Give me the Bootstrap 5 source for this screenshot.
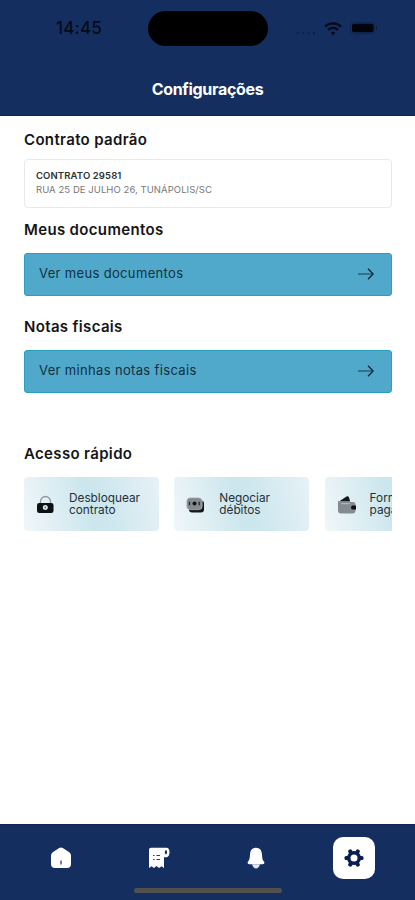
<!DOCTYPE html>
<html lang="pt-BR">
<head>
<meta charset="utf-8">
<meta name="viewport" content="width=device-width, initial-scale=1">
<title>Configurações</title>
<link href="https://cdn.jsdelivr.net/npm/bootstrap@5.3.0/dist/css/bootstrap.min.css" rel="stylesheet">
<style>
  body { font-family: Inter, "Liberation Sans", sans-serif; background: #fff; color: #151517; }
  svg { display: block; flex: none; }
  .phone { height: 900px; max-width: 415px; }
  .app-header { height: 116px; background: #152e60; border-bottom: 1px solid #0e2459; }
  .status { height: 57px; padding: 0 37px 0 56px; color: #040a18; }
  .clock { width: 92px; font-size: 17px; font-weight: 500; line-height: 57px; letter-spacing: .2px; }
  .island { width: 120px; height: 35px; background: #000; }
  .signal { width: 20px; margin-left: 28px; margin-top: 8px; }
  .app-title { font-size: 16px; font-weight: 700; line-height: 20px; margin-top: 22px; color: #fff; letter-spacing: -.32px; }
  .app-main { padding: 14px 23px 0 24px; }
  .section-title { font-size: 15px; font-weight: 600; line-height: 20px; margin: 0; letter-spacing: .34px; }
  .contract { height: 49px; margin: 9px 0 12px; padding: 9px 11px; border: 1px solid #e9e9e9; border-radius: 4px; font-size: 9.5px; line-height: 14px; letter-spacing: .06px; }
  .contract-name { font-weight: 600; color: #303030; letter-spacing: .12px; }
  .contract-address { color: #77777a; }
  .action { height: 43px; margin: 13px 0 21px; padding: 0 17px 1px 14px; background: #50a8ca; border: 1px solid #279fc0; border-radius: 3px; font-size: 13px; letter-spacing: .34px; color: #12303f; }
  .action-last { margin-bottom: 51px; }
  .tiles { gap: 15.3px; margin-top: 13px; }
  .tile { flex: 0 0 135px; height: 54px; padding: 1px 0 0 12px; border-radius: 4px; background: linear-gradient(75deg, #f1f7f9 0%, #cce6ee 48%, #cfe7ef 62%, #e7f2f6 100%); font-size: 11.8px; line-height: 11.5px; color: #263137; letter-spacing: 0; }
  .tile-icon { width: 20px; margin-right: 13px; }
  .app-nav { height: 76px; background: #152e60; border-top: 1px solid #0e2459; }
  .tabs { height: 66px; padding: 0 40px; }
  .tab-item { width: 42px; height: 42px; border-radius: 10px; }
  .home-bar { width: 148px; height: 5px; margin-top: -3px; background: #51504f; }
</style>
</head>
<body>
<div class="phone d-flex flex-column overflow-hidden">
  <header class="app-header flex-shrink-0">
    <div class="status d-flex align-items-center">
      <span class="clock">14:45</span>
      <span class="island rounded-pill"></span>
      <svg class="signal" width="20" height="4" viewBox="0 0 20 4" fill="#0b1c42"><circle cx="2" cy="2" r=".9"/><circle cx="7.3" cy="2" r=".9"/><circle cx="12.6" cy="2" r=".9"/><circle cx="18" cy="2" r=".9"/></svg>
      <svg class="ms-2" width="18" height="14" viewBox="0 0 18 14" fill="none" stroke="#040a18" stroke-width="2.2"><path d="M1 4.7C5.3.3 12.7.3 17 4.7M4 8c2.8-2.8 7.2-2.8 10 0"/><path d="M9 13.2 6.6 10.8c1.4-1.3 3.4-1.3 4.8 0z" fill="#040a18" stroke="none"/></svg>
      <svg class="ms-2" width="28" height="13" viewBox="0 0 28 13"><rect x=".5" y=".3" width="24" height="11.4" rx="3.2" fill="none" stroke="#10254f"/><rect x="2" y="1.7" width="21.5" height="8.6" rx="1.8" fill="#01040a"/><path d="M26 4q2 2 0 4z" fill="#0c1d42"/></svg>
    </div>
    <h1 class="app-title text-center mb-0">Configurações</h1>
  </header>

  <main class="app-main flex-grow-1">
    <h2 class="section-title">Contrato padrão</h2>
    <div class="contract">
      <div class="contract-name">CONTRATO 29581</div>
      <div class="contract-address">RUA 25 DE JULHO 26, TUNÁPOLIS/SC</div>
    </div>
    <h2 class="section-title">Meus documentos</h2>
    <a href="#" class="action d-flex align-items-center justify-content-between text-decoration-none">
      <span>Ver meus documentos</span>
      <svg width="16" height="12" viewBox="0 0 16 12" fill="none" stroke="#0b222e"><path d="M0 6h15" stroke-width=".8"/><path d="m10 .8 5.2 5.2-5.2 5.2" stroke-width="1.3"/></svg>
    </a>
    <h2 class="section-title">Notas fiscais</h2>
    <a href="#" class="action action-last d-flex align-items-center justify-content-between text-decoration-none">
      <span>Ver minhas notas fiscais</span>
      <svg width="16" height="12" viewBox="0 0 16 12" fill="none" stroke="#0b222e"><path d="M0 6h15" stroke-width=".8"/><path d="m10 .8 5.2 5.2-5.2 5.2" stroke-width="1.3"/></svg>
    </a>
    <h2 class="section-title">Acesso rápido</h2>
    <div class="tiles d-flex overflow-hidden">
      <div class="tile d-flex align-items-center">
        <svg class="tile-icon" width="20" height="20" viewBox="0 0 20 20"><path d="M4.500 9V6.500a5 5 0 0 1 10 0V9" fill="none" stroke="#8c979c" stroke-width="1.3"/><rect x="1" y="8" width="16.5" height="10" rx="2.2" fill="#0d1113"/><circle cx="9.3" cy="12.500" r="2.5" fill="#dcebf0"/><circle cx="9.3" cy="12.500" r=".9" fill="#68777d"/></svg>
        <span>Desbloquear<br>contrato</span>
      </div>
      <div class="tile d-flex align-items-center">
        <svg class="tile-icon" width="20" height="20" viewBox="0 0 20 20"><rect x="3" y="5.5" width="15" height="12" rx="3" fill="#171a1c"/><rect x=".7" y="2.7" width="15.5" height="12" rx="3.500" fill="#858b8e" stroke="#c1d7df" stroke-width=".5"/><circle cx="8.5" cy="8.5" r="2" fill="#111"/><path d="M3.500 6.700v3.500M13.200 6.700v3.500" stroke="#25292b" stroke-width="1.3"/></svg>
        <span>Negociar<br>débitos</span>
      </div>
      <div class="tile d-flex align-items-center">
        <svg class="tile-icon" width="20" height="20" viewBox="0 0 20 20"><path d="M2 6.500 9.500 1.500q1.800-1 2.500 1l1.200 4z" fill="#15181a"/><path d="M1 5.500q1 1.500 3 1.500h12q2.500 0 2.500 2.500v6q0 3-3 3H4q-3 0-3-3z" fill="#858b8e"/><path d="M4 8.700h9" stroke="#b5c0c4"/><path d="M19 10.500v4h-3a2 2 0 0 1 0-4z" fill="#0d1012"/></svg>
        <span>Formas de<br>pagamento</span>
      </div>
    </div>
  </main>

  <nav class="app-nav flex-shrink-0">
    <div class="tabs d-flex align-items-center justify-content-between">
      <a href="#" class="tab-item d-flex align-items-center justify-content-center" aria-label="Início">
        <svg width="22" height="22" viewBox="0 0 22 22"><path d="m9.200 1-6.500 4.200Q1 6.500 1 8.500V17q0 4 4 4h12q4 0 4-4V8.500q0-2-1.700-3.300L12.800 1q-1.800-1.200-3.600 0z" fill="#fff"/><path d="M11 13.500v4" stroke="#40506f" stroke-width="1.400"/></svg>
      </a>
      <a href="#" class="tab-item d-flex align-items-center justify-content-center" aria-label="Faturas">
        <svg width="22" height="22" viewBox="0 0 22 22"><path d="M3 .8h15.500q3 0 3 4.500t-3 5H16V21l-2.500-1.700L11 21l-2.500-2L6 21l-2.500-1.700L1 21V2.800q0-2 2-2z" fill="#fff"/><path d="M18 2.800q-2.400 2.500 0 5 2.200-2.500 0-5z" fill="#152e60"/><path d="M5 8.500h1.500M8.500 8.500H12M5 12.500h1.500M8.500 12.500H12" stroke="#253c69" stroke-width="1.200"/></svg>
      </a>
      <a href="#" class="tab-item d-flex align-items-center justify-content-center" aria-label="Notificações">
        <svg width="18" height="22" viewBox="0 0 18 22"><path d="M9 .7c3.700 0 5.800 2.800 6 6.500.2 4 .4 5.500 2 7.300.9 1.200.1 2.800-1.300 2.800H2.300c-1.400 0-2.200-1.600-1.300-2.800 1.600-1.800 1.800-3.300 2-7.300.2-3.700 2.300-6.500 6-6.500z" fill="#fff"/><path d="M5 17.200h8Q11.500 21.500 9 21.500T5 17.200z" fill="#e2e4ee"/></svg>
      </a>
      <a href="#" class="tab-item bg-white d-flex align-items-center justify-content-center" aria-label="Configurações">
        <svg width="20" height="20" viewBox="-10 -10 20 20" fill="#0b1e50"><circle r="5.4" fill="none" stroke="#0b1e50" stroke-width="3.2"/><rect x="-9.5" y="-2" width="19" height="4" rx="1.5"/><rect x="-9.5" y="-2" width="19" height="4" rx="1.5" transform="rotate(60)"/><rect x="-9.5" y="-2" width="19" height="4" rx="1.5" transform="rotate(120)"/><circle r="3.5" fill="#fff"/></svg>
      </a>
    </div>
    <div class="home-bar rounded-pill mx-auto"></div>
  </nav>
</div>
<script src="https://cdn.jsdelivr.net/npm/bootstrap@5.3.0/dist/js/bootstrap.bundle.min.js"></script>
</body>
</html>
